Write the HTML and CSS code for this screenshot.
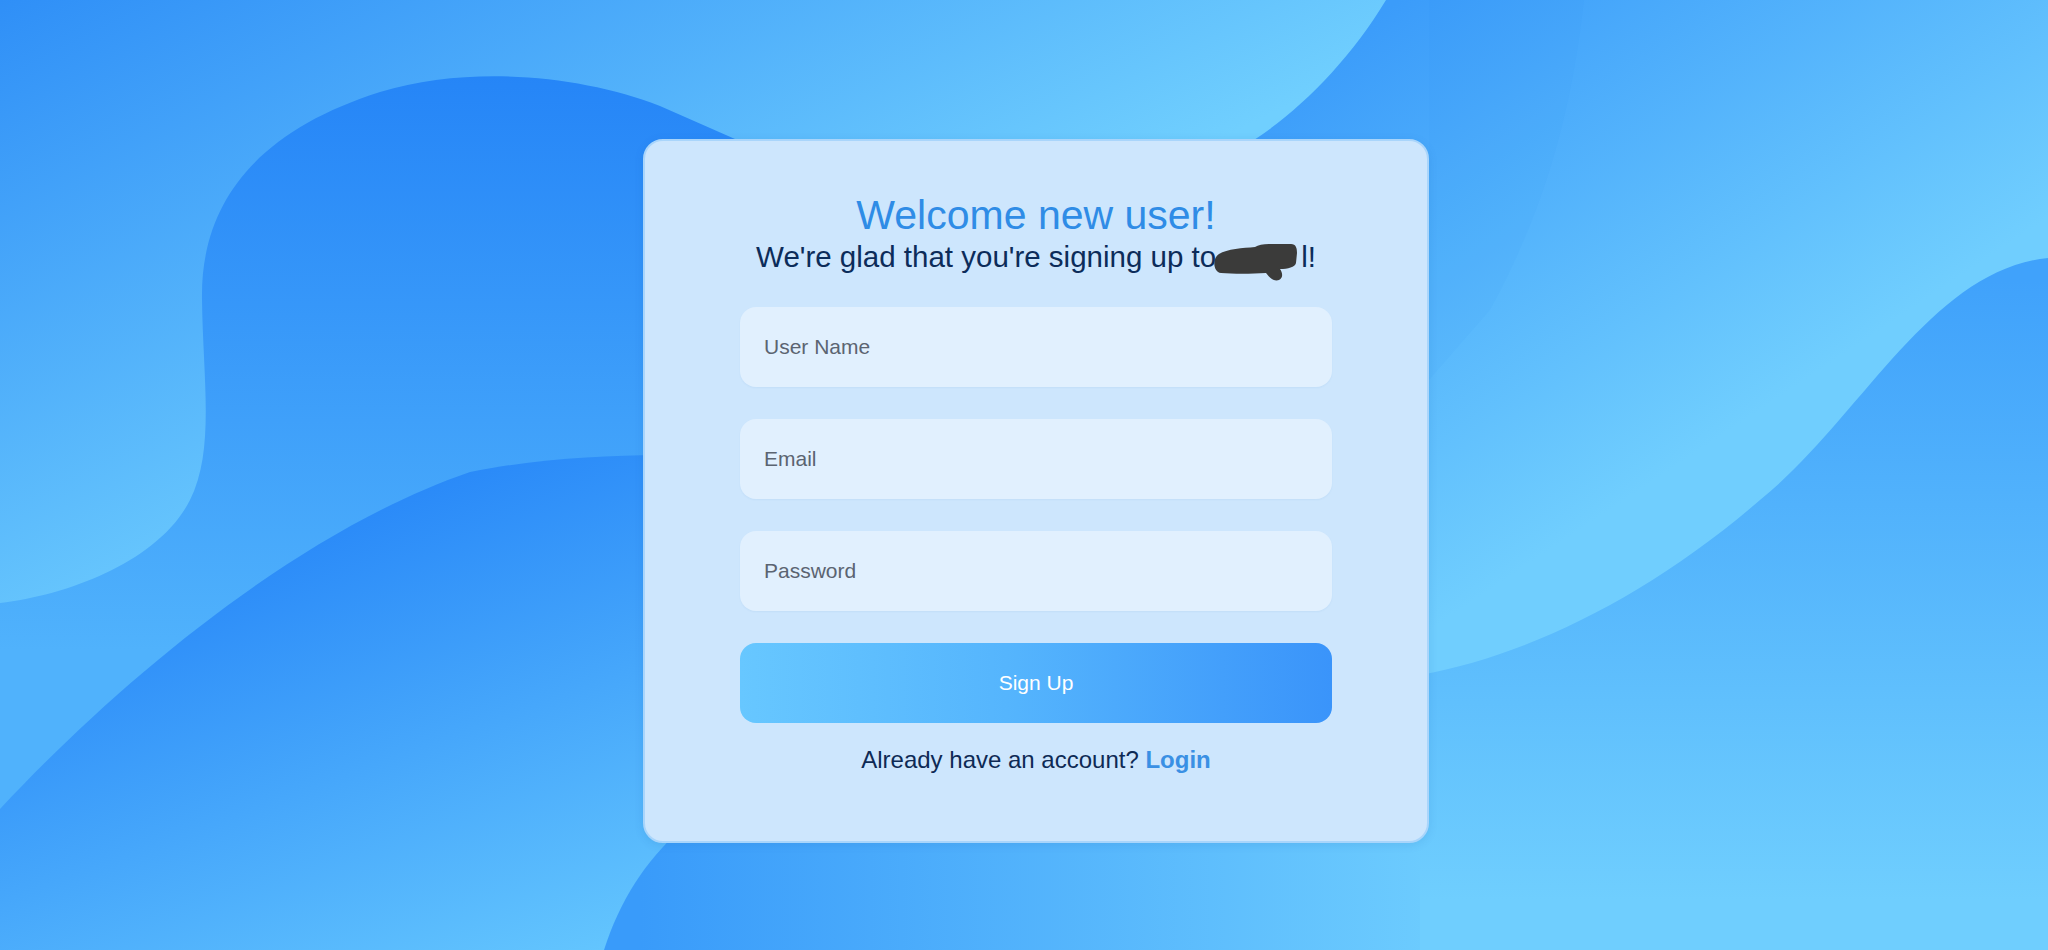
FILE: index.html
```html
<!DOCTYPE html>
<html lang="en">
<head>
<meta charset="utf-8">
<title>Sign Up</title>
<link rel="stylesheet" href="styles.css">
</head>
<body>
<svg class="backdrop" viewBox="0 0 2048 950" preserveAspectRatio="none" aria-hidden="true">
  <defs>
    <linearGradient id="gBase" gradientUnits="userSpaceOnUse" x1="0" y1="0" x2="300" y2="600">
      <stop offset="0" stop-color="#2f8ff7"/>
      <stop offset="1" stop-color="#70cffe"/>
    </linearGradient>
    <linearGradient id="gRight" gradientUnits="userSpaceOnUse" x1="1400" y1="0" x2="1700" y2="450">
      <stop offset="0" stop-color="#3b9cfa"/>
      <stop offset="1" stop-color="#70cefe"/>
    </linearGradient>
    <linearGradient id="gBlob1" gradientUnits="userSpaceOnUse" x1="0" y1="74" x2="0" y2="650">
      <stop offset="0" stop-color="#2585f7"/>
      <stop offset="1" stop-color="#50b2fc"/>
    </linearGradient>
    <linearGradient id="gBlob2" gradientUnits="userSpaceOnUse" x1="420" y1="470" x2="600" y2="960">
      <stop offset="0" stop-color="#2888f8"/>
      <stop offset="1" stop-color="#64c6fe"/>
    </linearGradient>
    <linearGradient id="gWave" gradientUnits="userSpaceOnUse" x1="0" y1="280" x2="0" y2="900">
      <stop offset="0" stop-color="#40a2fb"/>
      <stop offset="1" stop-color="#6fcefe"/>
    </linearGradient>
    <linearGradient id="gBottom" gradientUnits="userSpaceOnUse" x1="640" y1="0" x2="1440" y2="0">
      <stop offset="0" stop-color="#399bfa"/>
      <stop offset="1" stop-color="#6dccfe"/>
    </linearGradient>
  </defs>
  <rect x="0" y="0" width="2048" height="950" fill="url(#gBase)"/>
  <path d="M1386 0 C1350 60 1300 110 1254 140 L1150 320 L1150 950 L2048 950 L2048 0 Z" fill="url(#gRight)"/>
  <path d="M1584 0 C1572 110 1545 210 1490 310 L1429 380 L1429 0 Z" fill="#1f7ff0" opacity="0.04"/>
  <path d="M0 603 C70 595 160 560 190 500 C215 450 203 380 202 300 C200 200 260 130 380 92 C470 65 580 75 660 106 L760 150 L950 320 L950 950 L0 950 Z" fill="url(#gBlob1)"/>
  <path d="M0 809 C120 680 300 530 470 472 C540 458 600 456 660 455 L950 455 L950 950 L0 950 Z" fill="url(#gBlob2)"/>
  <path d="M604 950 C620 900 645 862 680 830 L1440 830 L1440 950 Z" fill="url(#gBottom)"/>
  <path d="M1420 675 C1530 655 1650 595 1760 500 C1860 420 1930 270 2048 258 L2048 950 L1420 950 Z" fill="url(#gWave)"/>
</svg>

<main class="page">
  <form class="card">
    <h1 class="title">Welcome new user!</h1>
    <p class="subtitle">We're glad that you're signing up to<span class="redact"><svg width="86" height="40" viewBox="0 0 86 40" aria-hidden="true"><path d="M6 11 C14 6 30 5 42 4 C45 2 50 1 56 1 L78 1 C83 1 84 5 84 10 L83 20 C82 24 75 26 67 26 C69 29 71 34 66 37 C61 39 56 34 53 30 C38 31 20 31 8 30 C0 29 -1 15 6 11 Z" fill="#3b3b3a"/></svg></span>l!</p>
    <div class="fields">
      <input class="field" type="text" placeholder="User Name">
      <input class="field" type="email" placeholder="Email">
      <input class="field" type="password" placeholder="Password">
      <button class="submit" type="button">Sign Up</button>
    </div>
    <p class="switch">Already have an account? <a class="switch-link" href="#">Login</a></p>
  </form>
</main>
</body>
</html>
```

FILE: styles.css
```css
* {
  box-sizing: border-box;
}

html,
body {
  margin: 0;
  padding: 0;
  width: 100%;
  height: 950px;
  overflow: hidden;
}

body {
  position: relative;
  font-family: "Liberation Sans", Arial, Helvetica, sans-serif;
  background: #4fb1fc;
}

.backdrop {
  position: absolute;
  left: 0;
  top: 0;
  width: 100%;
  height: 100%;
  display: block;
  z-index: 0;
}

.page {
  position: relative;
  z-index: 1;
  display: flex;
  justify-content: center;
  align-items: flex-start;
  height: 950px;
  padding: 139px 0 0 24px;
}

.card {
  width: 786px;
  margin: 0;
  padding: 51px 95px 67px;
  background: #cde6fd;
  border: 2px solid #a9d5fb;
  border-radius: 20px;
  box-shadow: 0 2px 10px rgba(20, 80, 160, 0.12);
  display: flex;
  flex-direction: column;
  align-items: center;
}

.title {
  margin: 0;
  font-size: 41px;
  line-height: 47px;
  font-weight: 400;
  color: #2f8ce6;
  text-align: center;
}

.subtitle {
  margin: 1px 0 0;
  font-size: 29.5px;
  line-height: 34px;
  color: #0c2c5a;
  text-align: center;
  white-space: nowrap;
}

.redact {
  display: inline-block;
  margin: -14px 2px -30px -3px;
  vertical-align: -16px;
  line-height: 0;
}

.fields {
  width: 100%;
  margin-top: 33px;
  display: flex;
  flex-direction: column;
  gap: 32px;
}

.field {
  width: 100%;
  height: 80px;
  padding: 0 24px;
  border: none;
  border-radius: 16px;
  background: #e1f0fe;
  box-shadow: 0 1px 2px rgba(40, 100, 170, 0.06);
  font-family: inherit;
  font-size: 21px;
  color: #1f2a38;
  outline: none;
}

.field::placeholder {
  color: #5b6471;
  opacity: 1;
}

.submit {
  width: 100%;
  height: 80px;
  border: none;
  border-radius: 16px;
  background: linear-gradient(to right, #67c7ff 0%, #55b5fd 45%, #3a94fa 100%);
  color: #ffffff;
  font-family: inherit;
  font-size: 21px;
  cursor: pointer;
}

.switch {
  margin: 23px 0 0;
  font-size: 24px;
  line-height: 28px;
  color: #0e2a55;
  text-align: center;
}

.switch-link {
  color: #3a90e4;
  font-weight: 700;
  text-decoration: none;
}
```
